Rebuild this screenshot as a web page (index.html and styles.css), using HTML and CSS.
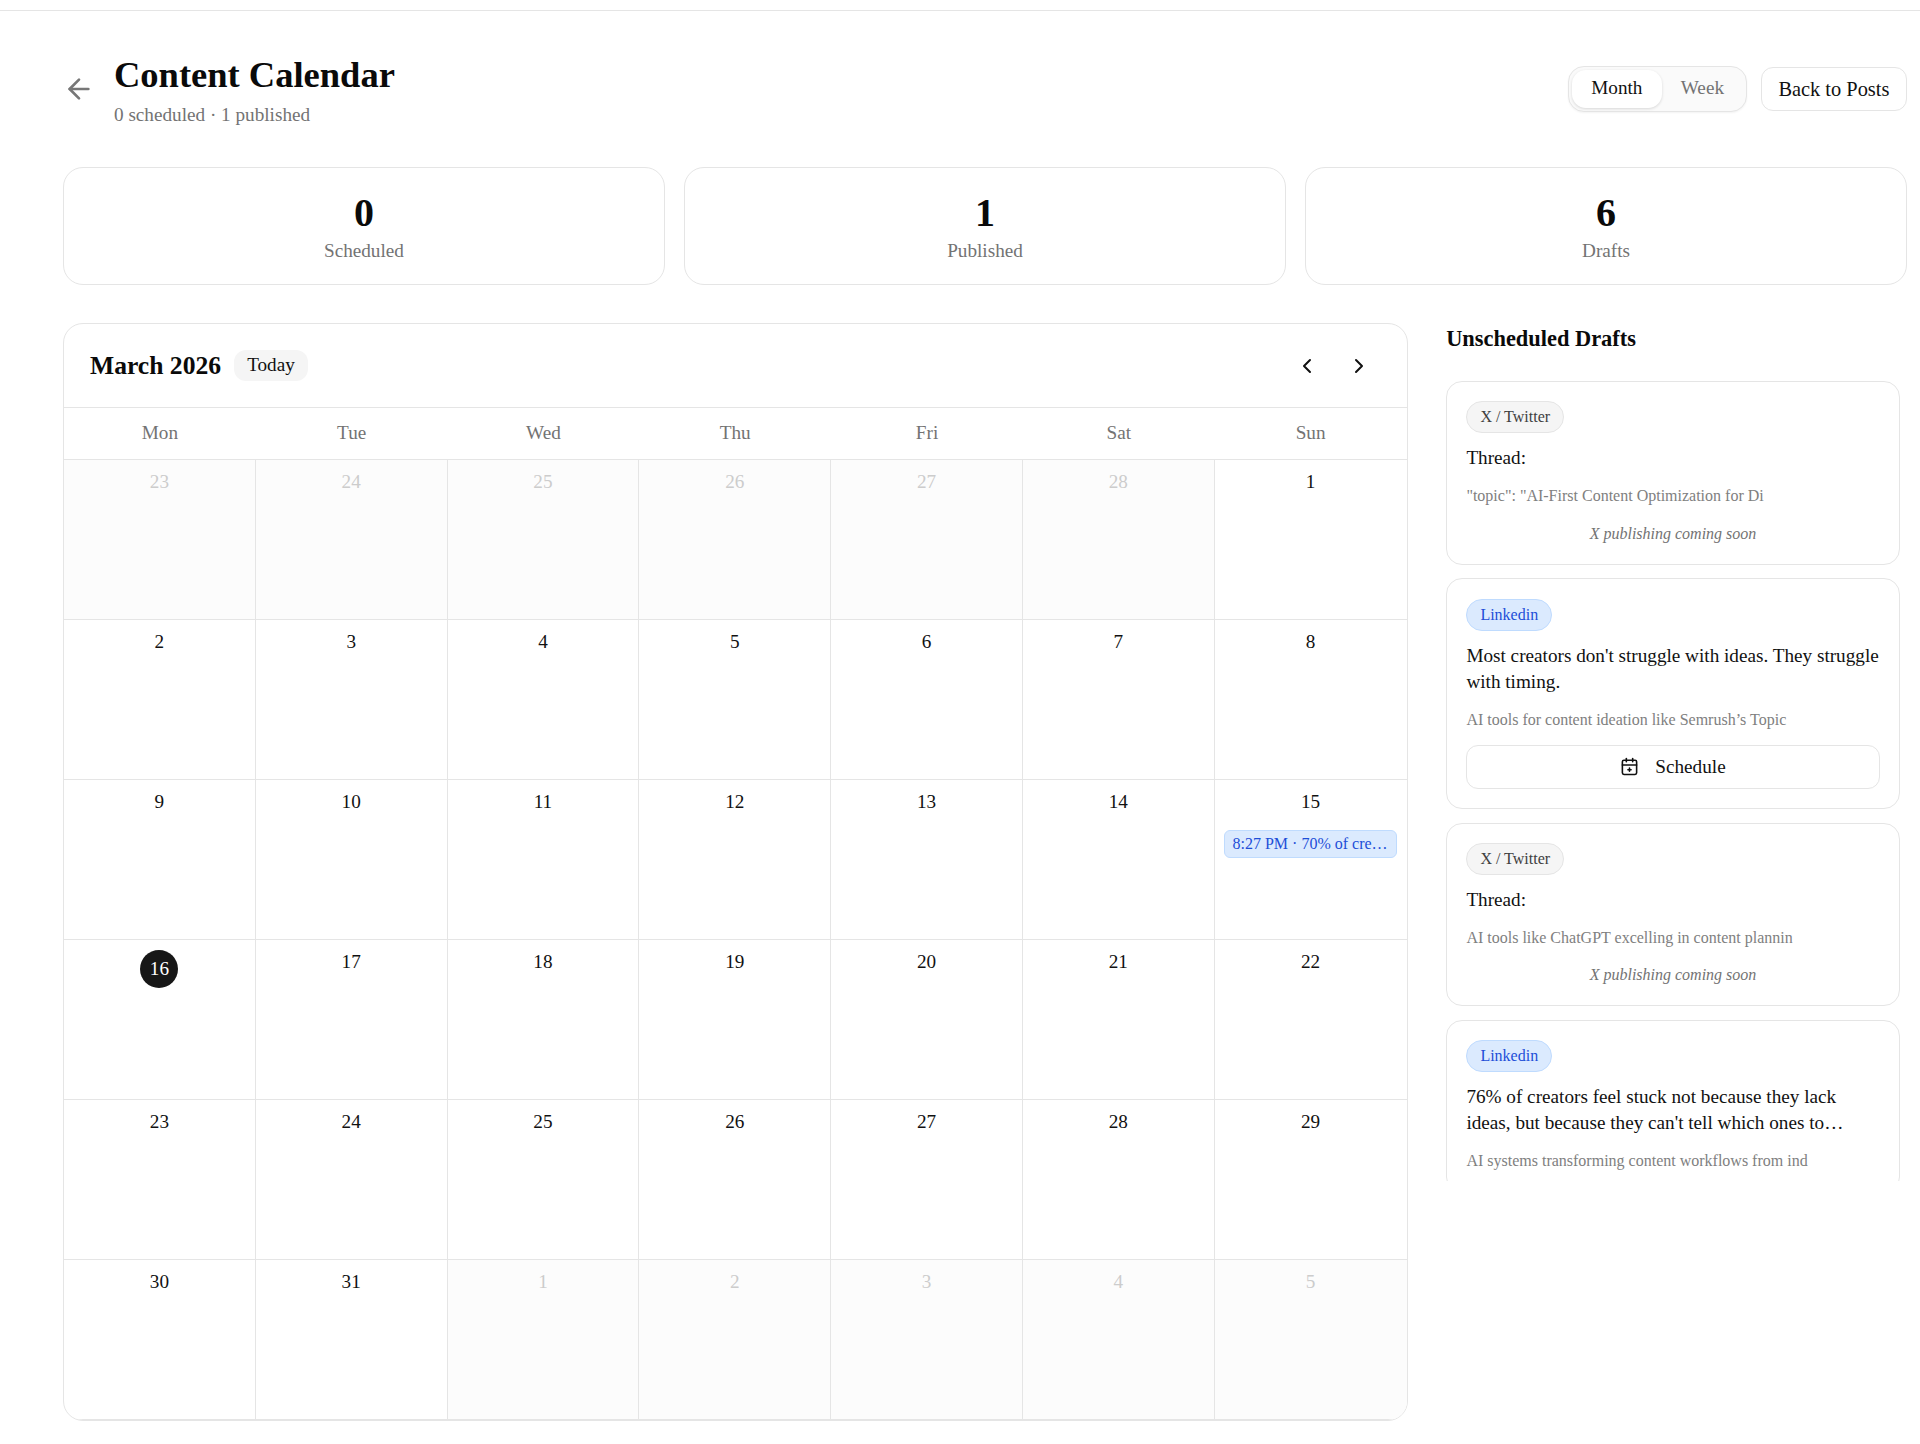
FILE: index.html
```html
<!DOCTYPE html>
<html lang="en">
<head>
    <meta charset="UTF-8">
    <meta name="viewport" content="width=device-width, initial-scale=1.0">
    <title>Content Calendar</title>
    <link rel="stylesheet" href="styles.css">
</head>
<body>
    <div class="topbar"></div>
    <main class="page">
        <!-- page header -->
        <header class="page-head">
            <div class="head-left">
                <button class="icon-btn back-btn" type="button" aria-label="Back">
                    <svg width="32" height="32" viewBox="0 0 24 24" fill="none" stroke="currentColor" stroke-width="2" stroke-linecap="round" stroke-linejoin="round"><path d="m12 19-7-7 7-7"/><path d="M19 12H5"/></svg>
                </button>
                <div>
                    <h1 class="page-title">Content Calendar</h1>
                    <p class="page-sub">0 scheduled · 1 published</p>
                </div>
            </div>
            <div class="head-right">
                <div class="segment">
                    <button class="seg-btn active" type="button">Month</button>
                    <button class="seg-btn" type="button">Week</button>
                </div>
                <button class="back-posts" type="button">Back to Posts</button>
            </div>
        </header>

        <!-- stats -->
        <section class="stats">
            <div class="stat"><div class="stat-num">0</div><div class="stat-label">Scheduled</div></div>
            <div class="stat"><div class="stat-num">1</div><div class="stat-label">Published</div></div>
            <div class="stat"><div class="stat-num">6</div><div class="stat-label">Drafts</div></div>
        </section>

        <div class="layout">
            <!-- calendar -->
            <section class="calendar">
                <div class="cal-head">
                    <div class="cal-title">
                        <h2>March 2026</h2>
                        <button class="today-btn" type="button">Today</button>
                    </div>
                    <div class="cal-nav">
                        <button class="icon-btn" type="button" aria-label="Previous month">
                            <svg width="24" height="24" viewBox="0 0 24 24" fill="none" stroke="currentColor" stroke-width="2" stroke-linecap="round" stroke-linejoin="round"><path d="m15 18-6-6 6-6"/></svg>
                        </button>
                        <button class="icon-btn" type="button" aria-label="Next month">
                            <svg width="24" height="24" viewBox="0 0 24 24" fill="none" stroke="currentColor" stroke-width="2" stroke-linecap="round" stroke-linejoin="round"><path d="m9 18 6-6-6-6"/></svg>
                        </button>
                    </div>
                </div>
                <div class="weekdays">
                    <div>Mon</div><div>Tue</div><div>Wed</div><div>Thu</div><div>Fri</div><div>Sat</div><div>Sun</div>
                </div>
                <div class="grid">
                    <div class="cell muted"><span class="day">23</span></div>
                    <div class="cell muted"><span class="day">24</span></div>
                    <div class="cell muted"><span class="day">25</span></div>
                    <div class="cell muted"><span class="day">26</span></div>
                    <div class="cell muted"><span class="day">27</span></div>
                    <div class="cell muted"><span class="day">28</span></div>
                    <div class="cell"><span class="day">1</span></div>

                    <div class="cell"><span class="day">2</span></div>
                    <div class="cell"><span class="day">3</span></div>
                    <div class="cell"><span class="day">4</span></div>
                    <div class="cell"><span class="day">5</span></div>
                    <div class="cell"><span class="day">6</span></div>
                    <div class="cell"><span class="day">7</span></div>
                    <div class="cell"><span class="day">8</span></div>

                    <div class="cell"><span class="day">9</span></div>
                    <div class="cell"><span class="day">10</span></div>
                    <div class="cell"><span class="day">11</span></div>
                    <div class="cell"><span class="day">12</span></div>
                    <div class="cell"><span class="day">13</span></div>
                    <div class="cell"><span class="day">14</span></div>
                    <div class="cell"><span class="day">15</span><div class="event">8:27 PM · 70% of creators feel stuck</div></div>

                    <div class="cell"><span class="day today">16</span></div>
                    <div class="cell"><span class="day">17</span></div>
                    <div class="cell"><span class="day">18</span></div>
                    <div class="cell"><span class="day">19</span></div>
                    <div class="cell"><span class="day">20</span></div>
                    <div class="cell"><span class="day">21</span></div>
                    <div class="cell"><span class="day">22</span></div>

                    <div class="cell"><span class="day">23</span></div>
                    <div class="cell"><span class="day">24</span></div>
                    <div class="cell"><span class="day">25</span></div>
                    <div class="cell"><span class="day">26</span></div>
                    <div class="cell"><span class="day">27</span></div>
                    <div class="cell"><span class="day">28</span></div>
                    <div class="cell"><span class="day">29</span></div>

                    <div class="cell"><span class="day">30</span></div>
                    <div class="cell"><span class="day">31</span></div>
                    <div class="cell muted"><span class="day">1</span></div>
                    <div class="cell muted"><span class="day">2</span></div>
                    <div class="cell muted"><span class="day">3</span></div>
                    <div class="cell muted"><span class="day">4</span></div>
                    <div class="cell muted"><span class="day">5</span></div>
                </div>
            </section>

            <!-- drafts sidebar -->
            <aside class="drafts">
                <h3 class="drafts-title">Unscheduled Drafts</h3>
                <div class="drafts-list">
                    <article class="draft">
                        <span class="badge">X / Twitter</span>
                        <p class="draft-text">Thread:</p>
                        <p class="draft-excerpt">"topic": "AI-First Content Optimization for Di</p>
                        <p class="draft-note">X publishing coming soon</p>
                    </article>
                    <article class="draft">
                        <span class="badge badge-blue">Linkedin</span>
                        <p class="draft-text">Most creators don't struggle with ideas. They struggle with timing.</p>
                        <p class="draft-excerpt">AI tools for content ideation like Semrush’s Topic</p>
                        <button class="schedule-btn" type="button">
                            <svg width="19" height="19" viewBox="0 0 24 24" fill="none" stroke="currentColor" stroke-width="2" stroke-linecap="round" stroke-linejoin="round"><path d="M8 2v4"/><path d="M16 2v4"/><rect x="3" y="4" width="18" height="18" rx="2"/><path d="M3 10h18"/><path d="M10 16h4"/><path d="M12 14v4"/></svg>
                            Schedule
                        </button>
                    </article>
                    <article class="draft">
                        <span class="badge">X / Twitter</span>
                        <p class="draft-text">Thread:</p>
                        <p class="draft-excerpt">AI tools like ChatGPT excelling in content plannin</p>
                        <p class="draft-note">X publishing coming soon</p>
                    </article>
                    <article class="draft">
                        <span class="badge badge-blue">Linkedin</span>
                        <p class="draft-text clamp">76% of creators feel stuck not because they lack ideas, but because they can't tell which ones to pursue first.</p>
                        <p class="draft-excerpt">AI systems transforming content workflows from ind</p>
                    </article>
                </div>
            </aside>
        </div>
    </main>
</body>
</html>
```

FILE: styles.css
```css
* {
    box-sizing: border-box;
}

html, body {
    margin: 0;
    padding: 0;
    background-color: #fff;
}

body {
    font-family: "Liberation Serif", "Times New Roman", serif;
    color: #111;
}

button {
    font-family: inherit;
    cursor: pointer;
}

h1, h2, h3, p {
    margin: 0;
}

.topbar {
    height: 11px;
    border-bottom: 1px solid #e5e5e5;
}

.page {
    padding: 32px 13px 0 63px;
}

/* header */
.page-head {
    display: flex;
    align-items: flex-start;
    justify-content: space-between;
    height: 124px;
}

.head-left {
    display: flex;
    align-items: flex-start;
    gap: 19px;
    margin-top: 10px;
}

.page-title {
    font-size: 36.5px;
    line-height: 44px;
    font-weight: 700;
    color: #0a0a0a;
}

.page-sub {
    margin-top: 5px;
    font-size: 19.2px;
    line-height: 26px;
    color: #737373;
}

.icon-btn {
    display: flex;
    align-items: center;
    justify-content: center;
    padding: 0;
    border: none;
    background: none;
    color: #111;
}

.back-btn {
    margin-top: 20px;
    color: #777;
}

.head-right {
    display: flex;
    align-items: center;
    gap: 13.6px;
    margin-top: 23px;
}

.segment {
    display: flex;
    padding: 3px;
    background-color: #fafafa;
    border: 1px solid #e5e5e5;
    border-radius: 16px;
    box-shadow: 0 1px 2px rgba(0, 0, 0, 0.05);
}

.seg-btn {
    height: 38px;
    padding: 0 19.2px 2px;
    border: none;
    border-radius: 14px;
    background: none;
    font-size: 19.2px;
    color: #737373;
}

.seg-btn.active {
    background-color: #fff;
    color: #111;
    box-shadow: 0 1px 3px rgba(0, 0, 0, 0.14);
}

.back-posts {
    height: 43.2px;
    padding: 0 16.6px;
    background-color: #fff;
    border: 1px solid #e5e5e5;
    border-radius: 12px;
    font-size: 20.4px;
    color: #111;
}

/* stats */
.stats {
    display: grid;
    grid-template-columns: repeat(3, minmax(0, 1fr));
    gap: 19.2px;
    margin-bottom: 38px;
}

.stat {
    height: 118px;
    padding-top: 23px;
    border: 1px solid #e5e5e5;
    border-radius: 20px;
    text-align: center;
}

.stat-num {
    font-size: 40px;
    line-height: 44px;
    font-weight: 700;
    color: #0a0a0a;
}

.stat-label {
    margin-top: 3px;
    font-size: 19.2px;
    line-height: 26px;
    color: #737373;
}

.layout {
    display: grid;
    grid-template-columns: 1344.5px 460.8px;
    gap: 38.7px;
    align-items: start;
}

/* calendar */
.calendar {
    border: 1px solid #e5e5e5;
    border-radius: 20px;
    overflow: hidden;
}

.cal-head {
    display: flex;
    align-items: center;
    justify-content: space-between;
    height: 84px;
    padding: 0 26px;
    border-bottom: 1px solid #e5e5e5;
}

.cal-title {
    display: flex;
    align-items: center;
    gap: 13.3px;
}

.cal-title h2 {
    font-size: 25.6px;
    line-height: 32px;
    font-weight: 700;
    color: #0a0a0a;
}

.today-btn {
    height: 31px;
    padding: 0 12.8px 1px;
    border: none;
    border-radius: 12px;
    background-color: #f5f5f5;
    font-size: 19.2px;
    color: #111;
}

.cal-nav {
    display: flex;
    gap: 28px;
    padding-right: 9.5px;
}

.weekdays {
    display: grid;
    grid-template-columns: repeat(7, minmax(0, 1fr));
    height: 52px;
    border-bottom: 1px solid #e5e5e5;
}

.weekdays div {
    text-align: center;
    font-size: 19.2px;
    line-height: 50px;
    color: #737373;
}

.grid {
    display: grid;
    grid-template-columns: repeat(7, minmax(0, 1fr));
}

.cell {
    height: 160px;
    min-width: 0;
    padding: 8px 9.6px;
    border-right: 1px solid #e5e5e5;
    border-bottom: 1px solid #e5e5e5;
    text-align: center;
}

.cell:nth-child(7n) {
    border-right: none;
}

.cell.muted {
    background-color: #fcfcfc;
}

.day {
    display: block;
    width: 38px;
    height: 38px;
    margin: 0 auto 4px;
    font-size: 19.2px;
    line-height: 28px;
    border-radius: 50%;
    color: #111;
}

.cell.muted .day {
    color: #ccc;
}

.day.today {
    margin-top: 2px;
    background-color: #171717;
    color: #fff;
    line-height: 38px;
}

.event {
    height: 27.7px;
    padding: 0 7.2px;
    line-height: 25.7px;
    text-align: left;
    font-size: 16px;
    color: #1d4ed8;
    background-color: #dbeafe;
    border: 1px solid #bfdbfe;
    border-radius: 6px;
    white-space: nowrap;
    overflow: hidden;
    text-overflow: ellipsis;
}

/* sidebar */
.drafts-title {
    margin-top: 2px;
    margin-bottom: 28px;
    font-size: 22.4px;
    line-height: 28px;
    font-weight: 700;
    color: #0a0a0a;
}

.drafts-list {
    display: flex;
    flex-direction: column;
    gap: 13.4px;
    height: 800px;
    padding-right: 7.2px;
    overflow: hidden;
}

.draft {
    flex: none;
    padding: 19.2px;
    border: 1px solid #e5e5e5;
    border-radius: 16px;
}

.badge {
    display: block;
    width: fit-content;
    height: 32px;
    padding: 0 13px;
    line-height: 30px;
    font-size: 16px;
    color: #404040;
    background-color: #f5f5f5;
    border: 1px solid #e5e5e5;
    border-radius: 999px;
}

.badge-blue {
    color: #1d4ed8;
    background-color: #dbeafe;
    border-color: #bfdbfe;
}

.draft-text {
    margin-top: 12px;
    font-size: 19.2px;
    line-height: 26px;
    color: #111;
}

.draft-text.clamp {
    display: -webkit-box;
    -webkit-line-clamp: 2;
    -webkit-box-orient: vertical;
    overflow: hidden;
}

.draft-excerpt {
    margin-top: 13px;
    font-size: 16px;
    line-height: 24px;
    color: #808080;
    white-space: nowrap;
    overflow: hidden;
}

.draft-note {
    margin-top: 14.6px;
    font-size: 16px;
    line-height: 22px;
    font-style: italic;
    text-align: center;
    color: #737373;
}

.schedule-btn {
    display: flex;
    align-items: center;
    justify-content: center;
    gap: 16px;
    width: 100%;
    height: 44.4px;
    margin-top: 13px;
    background-color: #fff;
    border: 1px solid #e5e5e5;
    border-radius: 12px;
    font-size: 19.2px;
    color: #111;
}
```
